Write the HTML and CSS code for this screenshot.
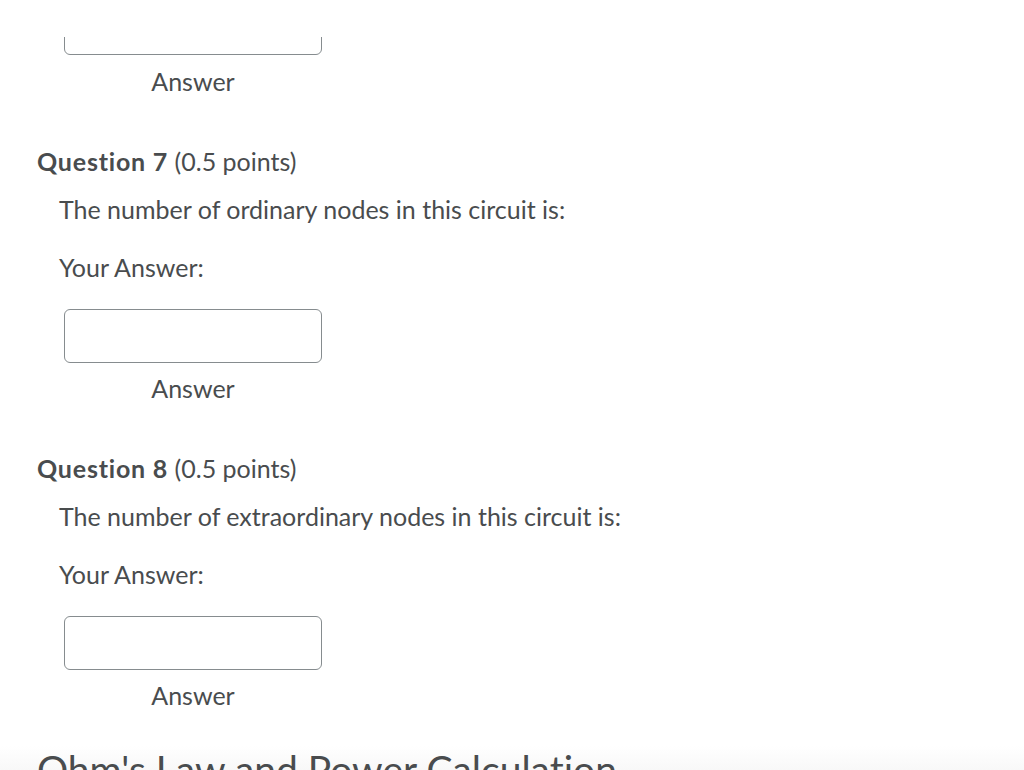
FILE: index.html
```html
<!DOCTYPE html>
<html>
<head>
<meta charset="utf-8">
<link rel="stylesheet" href="styles.css">
</head>
<body>
<div class="topcover"></div>
<main class="page">
  <section class="answer-block first">
    <div class="field"><input class="input" type="text"></div>
    <div class="label">Answer</div>
  </section>

  <section class="question">
    <h3 class="q-title"><strong>Question 7</strong> (0.5 points)</h3>
    <p class="q-text">The number of ordinary nodes in this circuit is:</p>
    <p class="q-your">Your Answer:</p>
    <div class="answer-block">
      <div class="field"><input class="input" type="text"></div>
      <div class="label">Answer</div>
    </div>
  </section>

  <section class="question">
    <h3 class="q-title"><strong>Question 8</strong> (0.5 points)</h3>
    <p class="q-text">The number of extraordinary nodes in this circuit is:</p>
    <p class="q-your">Your Answer:</p>
    <div class="answer-block">
      <div class="field"><input class="input" type="text"></div>
      <div class="label">Answer</div>
    </div>
  </section>

  <section class="section-head">
    <h2 class="section-title">Ohm's Law and Power Calculation</h2>
  </section>
</main>
</body>
</html>
```

FILE: styles.css
```css
* { box-sizing: border-box; }
html, body {
  margin: 0;
  padding: 0;
  background: #ffffff;
  overflow: hidden;
}
body {
  font-family: Lato, "Open Sans", sans-serif;
  color: #494c4e;
  font-size: 25px;
  font-variant-ligatures: none;
}
.topcover {
  position: fixed;
  top: 0;
  left: 0;
  right: 0;
  height: 37px;
  background: #ffffff;
  z-index: 2;
}
.page {
  padding-left: 37px;
}
.answer-block {
  width: 258px;
  margin-left: 27px;
  display: flex;
  flex-direction: column;
}
.answer-block.first {
  margin-top: 1px;
}
.field {
  display: flex;
}
.input {
  width: 258px;
  height: 54px;
  border: 1px solid #868c8f;
  border-radius: 6px;
  background: #fff;
  margin: 0;
  padding: 0;
  outline: none;
}
.label {
  text-align: center;
  line-height: 30px;
  margin-top: 10px;
}
.answer-block.first .label {
  margin-top: 11px;
}
.question {
  margin-top: 50px;
}
.q-title {
  margin: 0;
  font-size: 25px;
  font-weight: 400;
  line-height: 30px;
}
.q-title strong {
  font-weight: 700;
  letter-spacing: 0.8px;
}
.q-text {
  margin: 18px 0 0 22px;
  line-height: 30px;
}
.q-your {
  margin: 28px 0 0 22px;
  line-height: 30px;
}
.question .answer-block {
  margin-top: 27px;
  margin-left: 27px;
}
.section-head {
  margin-top: 36px;
  margin-left: -37px;
  padding-left: 37px;
  background: linear-gradient(#ffffff, #f2f2f2);
}
.section-title {
  margin: 0;
  font-size: 39px;
  font-weight: 400;
  line-height: 46px;
}
```
